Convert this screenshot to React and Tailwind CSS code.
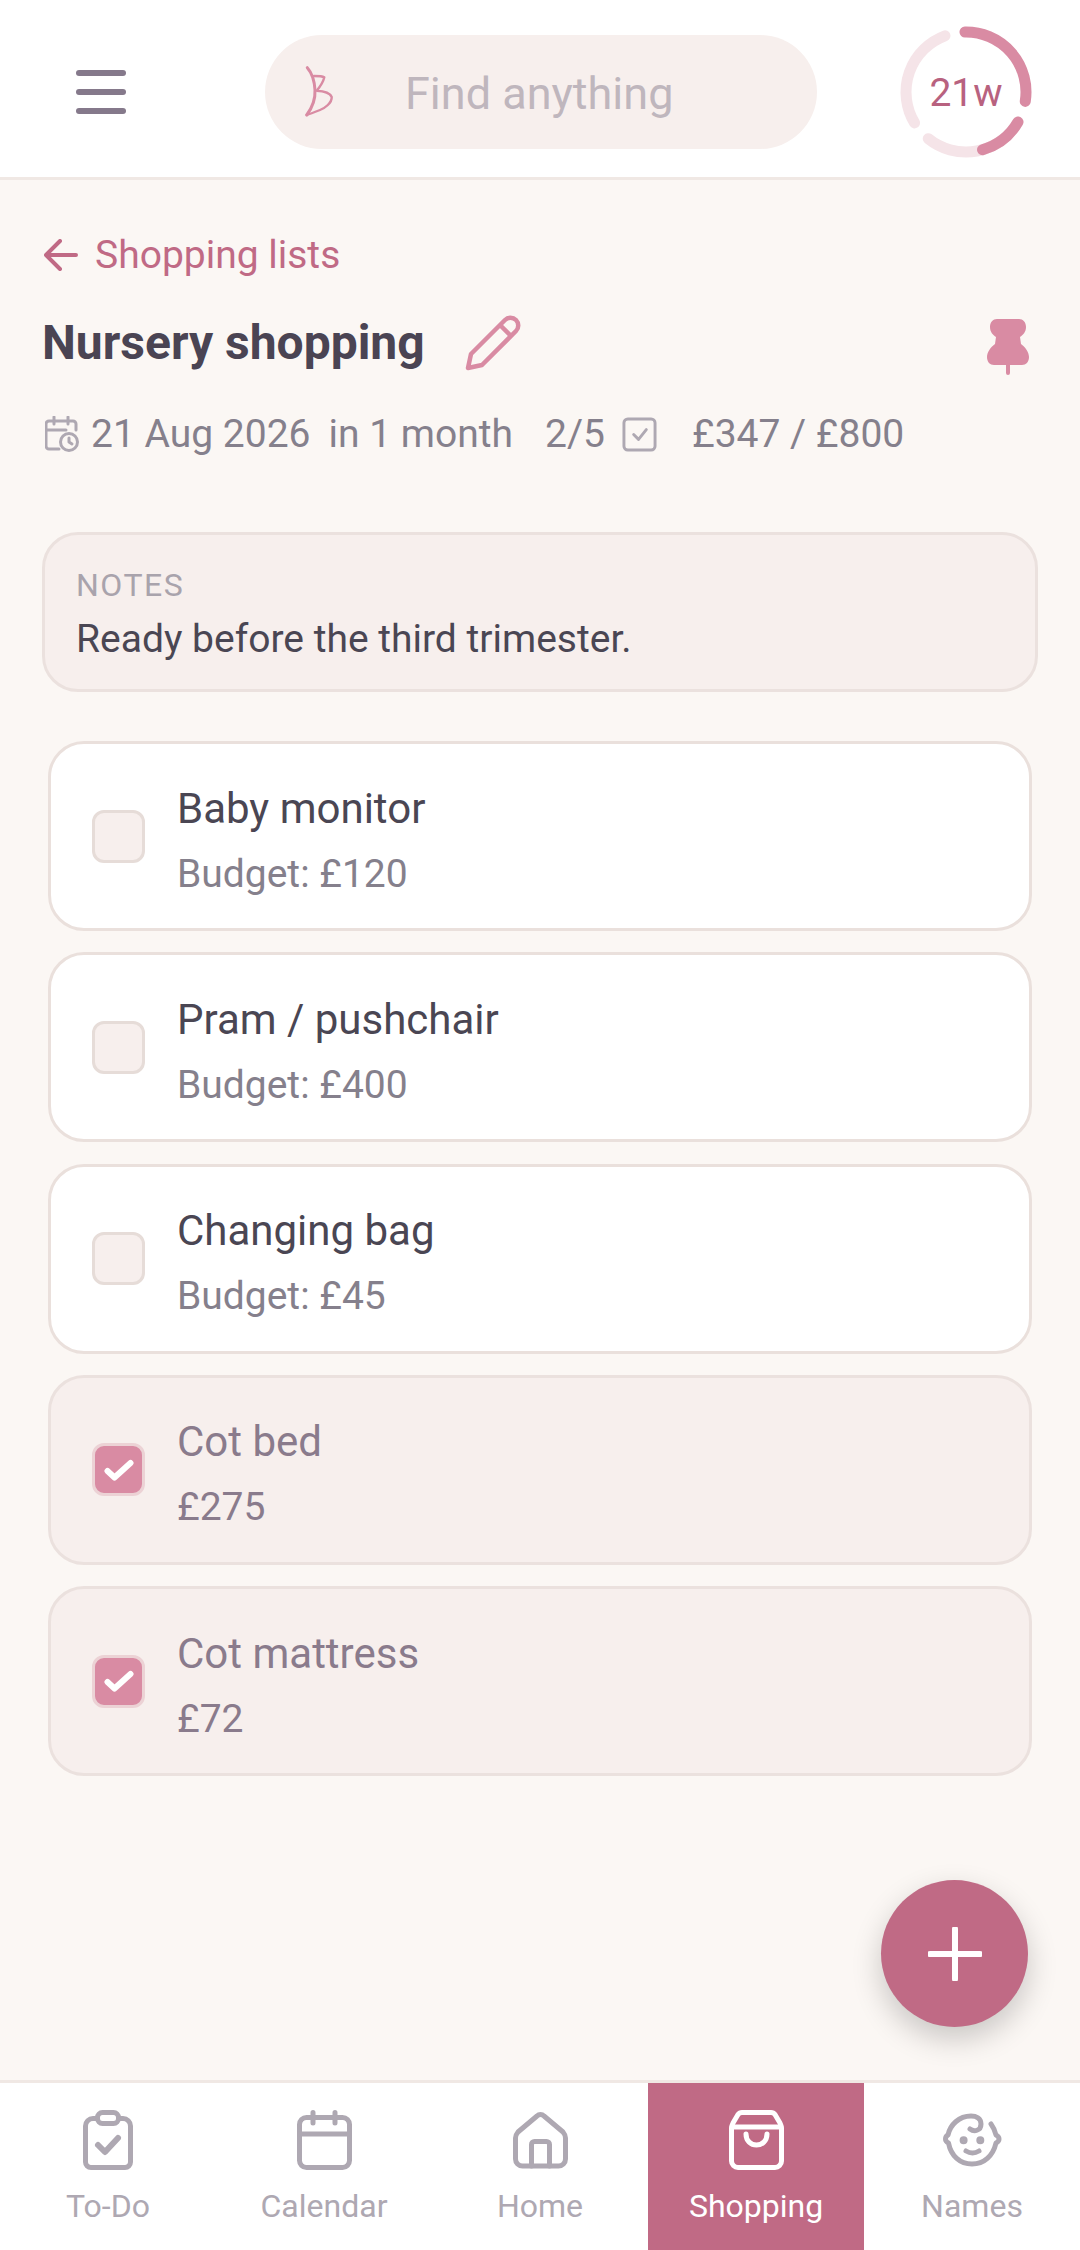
import React from "react";

const arc = (r, a, b) => {
  const p = (d) => {
    const t = ((d - 90) * Math.PI) / 180;
    return `${(67 + r * Math.cos(t)).toFixed(2)} ${(67 + r * Math.sin(t)).toFixed(2)}`;
  };
  return `M${p(a)} A${r} ${r} 0 ${b - a > 180 ? 1 : 0} 1 ${p(b)}`;
};

function WeekRing() {
  return (
    <div className="relative h-[134px] w-[134px]">
      <svg width="134" height="134" viewBox="0 0 134 134" fill="none" strokeWidth="11" strokeLinecap="round">
        <path d={arc(60, 120, 219)} stroke="#f5e4e8" />
        <path d={arc(60, 239, 339.5)} stroke="#f5e4e8" />
        <path d={arc(60, -1, 99)} stroke="#d98ba3" />
        <path d={arc(60, 120, 164)} stroke="#d98ba3" />
      </svg>
      <span className="absolute inset-0 flex items-center justify-center pt-[3px] text-[39px] text-[#b8627f]">21w</span>
    </div>
  );
}

function Item({ name, sub, done }) {
  return (
    <div
      className={`flex h-[190px] items-center rounded-[36px] border-[3px] pl-[41px] ${
        done ? "border-[#ebe1de] bg-[#f7efed]" : "border-[#eae0dc] bg-white"
      }`}
    >
      {done ? (
        <div className="flex h-[53px] w-[53px] items-center justify-center rounded-[12px] border-[3px] border-[#ecd2d5] bg-[#d98ba3]">
          <svg width="30" height="24" viewBox="0 0 30 24" fill="none" stroke="#fff" strokeWidth="6" strokeLinecap="round" strokeLinejoin="round">
            <path d="M3.500 13l7 6.500L26.500 5" />
          </svg>
        </div>
      ) : (
        <div className="h-[53px] w-[53px] rounded-[12px] border-[3px] border-[#e6dcd8] bg-[#f7efed]" />
      )}
      <div className="ml-[32px] pt-[7px]">
        <div className={`text-[42px] leading-[56px] ${done ? "text-[#8a7b8c]" : "text-[#4a4653]"}`}>{name}</div>
        <div className={`mt-[12px] text-[39px] leading-[50px] ${done ? "text-[#8a7b8c]" : "text-[#85808c]"}`}>{sub}</div>
      </div>
    </div>
  );
}

function NavItem({ label, active, children }) {
  return (
    <div className={`flex flex-1 flex-col items-center pt-[27px] ${active ? "bg-[#c06a85] text-white" : "text-[#aea8b2]"}`}>
      <div className="flex h-[60px] items-center justify-center">{children}</div>
      <span className="mt-[16px] text-[32px] leading-[40px]">{label}</span>
    </div>
  );
}

const items = [
  { name: "Baby monitor", sub: "Budget: £120" },
  { name: "Pram / pushchair", sub: "Budget: £400" },
  { name: "Changing bag", sub: "Budget: £45" },
  { name: "Cot bed", sub: "£275", done: true },
  { name: "Cot mattress", sub: "£72", done: true },
];

export default function App() {
  return (
    <div className="flex h-[2250px] w-[1080px] flex-col bg-[#fbf7f4] font-['Roboto',sans-serif]">
      <header className="flex h-[180px] shrink-0 items-center border-b-[3px] border-[#f0e8e4] bg-white pt-[7px]">
        <div className="ml-[76px] flex w-[50px] flex-col gap-[13px]">
          <div className="h-[6px] rounded-full bg-[#85798b]" />
          <div className="h-[6px] rounded-full bg-[#85798b]" />
          <div className="h-[6px] rounded-full bg-[#85798b]" />
        </div>
        <div className="relative ml-[139px] flex h-[114px] w-[552px] items-center rounded-full bg-[#f7efed] pl-[140px] pt-[3px] text-[45px] text-[#bfb6bd]">
          <svg className="absolute left-[38px] top-[27px]" width="32" height="60" viewBox="0 0 32 60" fill="none" stroke="#d98ba3" strokeWidth="2.4" strokeLinecap="round" strokeLinejoin="round">
            <path d="M4.300 5.700C9 11 11.500 20 12 28 12.500 38 9 46 3.700 53" strokeWidth="3" />
            <path d="M11 14c4 0 8 0 10.300 1.300C20 21 16 26 13.700 28.700 20 29 27 31 28.700 35 29 41 22 46 17 48 12 50 7 52 3.700 53" />
          </svg>
          Find anything
        </div>
        <div className="ml-[82px]">
          <WeekRing />
        </div>
      </header>

      <main className="relative flex-1 px-[42px] pt-[50px]">
        <div className="ml-[2px] flex items-center gap-[17px] text-[39px] leading-[50px] text-[#c06a85]">
          <svg width="34" height="32" viewBox="0 0 34 32" fill="none" stroke="#c06a85" strokeWidth="4" strokeLinecap="round" strokeLinejoin="round">
            <path d="M32 16H3M16 2L2 16l14 14" />
          </svg>
          Shopping lists
        </div>

        <div className="mt-[33px] flex h-[60px] items-center">
          <h1 className="text-[48px] font-bold leading-[60px] text-[#4a4453]">Nursery shopping</h1>
          <svg className="ml-[40px]" width="56" height="56" viewBox="0 0 56 56" fill="none" stroke="#d98ba3" strokeWidth="4.5" strokeLinejoin="round">
            <path d="M3 53l3-14L40 5c3-3 8-3 11 0s3 8 0 11L17 50z" />
            <path d="M35 10l11 11" />
          </svg>
          <svg className="ml-auto mr-[9px] mt-[8px]" width="42" height="56" viewBox="0 0 42 56" fill="#d98ba3">
            <path d="M10 0h22c4 0 7 3 7 8 0 5-3 8-6 10l1 7c4 3 8 8 8 13 0 5-3 8-7 8H23v8a2 2 0 0 1-4 0v-8H7c-4 0-7-3-7-8 0-5 4-10 8-13l1-7c-3-2-6-5-6-10 0-5 3-8 7-8z" />
          </svg>
        </div>

        <div className="mt-[36px] flex items-center text-[39px] leading-[50px] text-[#85808c]">
          <svg className="ml-[3px]" width="34" height="36" viewBox="0 0 34 36" fill="none" stroke="#aea8b2" strokeWidth="3" strokeLinecap="round" strokeLinejoin="round">
            <path d="M14 33H4a3 3 0 0 1-3-3V8a3 3 0 0 1 3-3h24a3 3 0 0 1 3 3v6M9 1v7M23 1v7M1 14h20" />
            <circle cx="24" cy="26" r="8.500" />
            <path d="M24 22v4l3 2" />
          </svg>
          <span className="ml-[12px]">21 Aug 2026</span>
          <span className="ml-[18px]">in 1 month</span>
          <span className="ml-[32px]">2/5</span>
          <svg className="ml-[17px]" width="35" height="35" viewBox="0 0 36 36" fill="none" stroke="#aea8b2" strokeWidth="3" strokeLinecap="round" strokeLinejoin="round">
            <rect x="2" y="2" width="32" height="32" rx="4" />
            <path d="M12 18l5 5 8-10" />
          </svg>
          <span className="ml-[35px]">£347 / £800</span>
        </div>

        <div className="mt-[73px] h-[160px] rounded-[36px] border-[3px] border-[#ebe1de] bg-[#f7efed] px-[31px] pt-[30px]">
          <div className="text-[32px] leading-[40px] tracking-[1.5px] text-[#a9a3ac]">NOTES</div>
          <div className="mt-[9px] text-[39px] leading-[50px] text-[#4a4653]">Ready before the third trimester.</div>
        </div>

        <div className="mt-[49px] flex flex-col gap-[21.25px] px-[6px]">
          {items.map((it) => (
            <Item key={it.name} {...it} />
          ))}
        </div>

        <button className="absolute bottom-[53px] right-[52px] flex h-[147px] w-[147px] items-center justify-center rounded-full bg-[#c06a85] shadow-[0_12px_30px_rgba(0,0,0,0.2)]">
          <svg width="54" height="54" viewBox="0 0 54 54" stroke="#fff" strokeWidth="6" strokeLinecap="round">
            <path d="M27 2v50M2 27h50" />
          </svg>
        </button>
      </main>

      <nav className="flex h-[170px] shrink-0 border-t-[3px] border-[#f0e8e4] bg-white">
        <NavItem label="To-Do">
          <svg width="50" height="60" viewBox="0 0 50 60" fill="none" stroke="currentColor" strokeWidth="5" strokeLinecap="round" strokeLinejoin="round">
            <path d="M14 8.500H10a7.500 7.500 0 0 0-7.500 7.500v36a5.500 5.500 0 0 0 5.500 5.500h34a5.500 5.500 0 0 0 5.500-5.500V16a7.500 7.500 0 0 0-7.500-7.500h-4" />
            <rect x="14.500" y="2.500" width="21" height="11" rx="5" />
            <path d="M15 35l7 7 13-14" strokeWidth="6" />
          </svg>
        </NavItem>
        <NavItem label="Calendar">
          <svg width="55" height="60" viewBox="0 0 55 60" fill="none" stroke="currentColor" strokeWidth="5" strokeLinecap="round" strokeLinejoin="round">
            <rect x="2.500" y="7.500" width="50" height="50" rx="7" />
            <path d="M2.500 24h50M16 2.500V13M38 2.500V13" />
          </svg>
        </NavItem>
        <NavItem label="Home">
          <svg width="55" height="57" viewBox="0 0 55 57" fill="none" stroke="currentColor" strokeWidth="5" strokeLinecap="round" strokeLinejoin="round">
            <path d="M24 4L5 20q-2.500 3-2.500 6v21a7 7 0 0 0 7 7h36a7 7 0 0 0 7-7V26q0-3-2.500-6L31 4a5 5 0 0 0-7 0z" />
            <path d="M18.500 54V32.500a3 3 0 0 1 3-3h12a3 3 0 0 1 3 3V54" />
          </svg>
        </NavItem>
        <NavItem label="Shopping" active>
          <svg width="55" height="60" viewBox="0 0 55 60" fill="none" stroke="currentColor" strokeWidth="5" strokeLinecap="round" strokeLinejoin="round">
            <path d="M13 2.500h29a5 5 0 0 1 4 2L51 13q1.500 3 1.500 5v33a6.500 6.500 0 0 1-6.500 6.500H9A6.500 6.500 0 0 1 2.500 51V18q0-2 1.500-5L9 4.500a5 5 0 0 1 4-2z" />
            <path d="M3 17h49M17 24c0 7 5 11 10.500 11S38 31 38 24" />
          </svg>
        </NavItem>
        <NavItem label="Names">
          <svg width="59" height="54" viewBox="0 0 59 54" fill="none" stroke="currentColor" strokeWidth="5" strokeLinecap="round" strokeLinejoin="round">
            <path d="M27 16c4 3 11 2 11-5 0-6-5-8-10-8C16 3 7 12 5 22c-2 1-2.500 3-2.500 4s1 3 3 4C8 43 17 51 29 51s21-8 24-21c2-1 3-3 3-4s-1-3-3-4c-1-4-2-7-5-11" />
            <circle cx="20.600" cy="27.300" r="1.500" fill="currentColor" />
            <circle cx="37.300" cy="27.300" r="1.500" fill="currentColor" />
            <path d="M23 38c4 2.500 9 2.500 13 0" />
          </svg>
        </NavItem>
      </nav>
    </div>
  );
}
